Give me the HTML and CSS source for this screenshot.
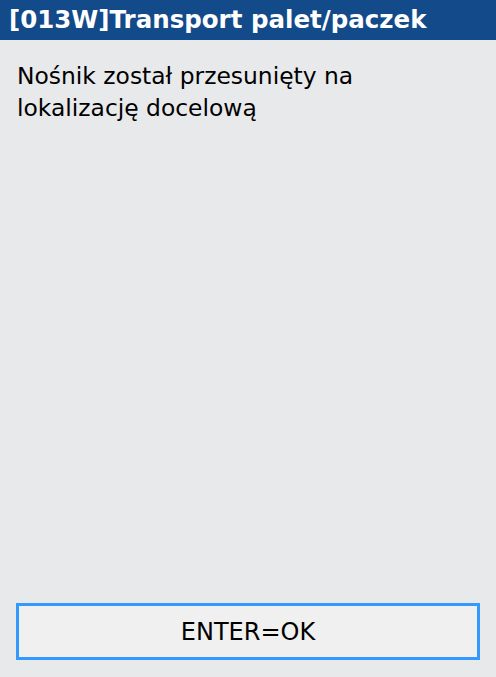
FILE: index.html
```html
<!DOCTYPE html>
<html lang="pl">
<head>
    <meta charset="UTF-8">
    <meta name="viewport" content="width=device-width, initial-scale=1.0">
    <title>Transport palet/paczek</title>
    <link rel="stylesheet" href="styles.css">
</head>
<body>

<div class="screen">
    <div class="header">[013W]Transport palet/paczek</div>

    <div class="message">
        Nośnik został przesunięty na<br>
        lokalizację docelową
    </div>

    <div class="footer">
        <button class="ok-button">ENTER=OK</button>
    </div>
</div>

</body>
</html>
```

FILE: styles.css
```css
body {
    margin: 0;
    padding: 0;
    background-color: #e8e9eb;
    font-family: "DejaVu Sans", sans-serif;
    color: #000;
}
.screen {
    display: flex;
    flex-direction: column;
    height: 677px;
}
.header {
    height: 40px;
    line-height: 40px;
    padding-left: 9px;
    background-color: #134a89;
    color: #fff;
    font-weight: bold;
    font-size: 24.5px;
    white-space: nowrap;
}
.message {
    flex: 1;
    padding: 20px 16px 0 17px;
    font-size: 23.4px;
    line-height: 32px;
}
.footer {
    padding: 0 16px 17px 16px;
}
.ok-button {
    display: block;
    width: 100%;
    height: 57px;
    border: 3px solid #3399ff;
    background-color: #f0f0f0;
    font-family: "DejaVu Sans", sans-serif;
    font-size: 24px;
    color: #000;
    padding: 0;
}
```
